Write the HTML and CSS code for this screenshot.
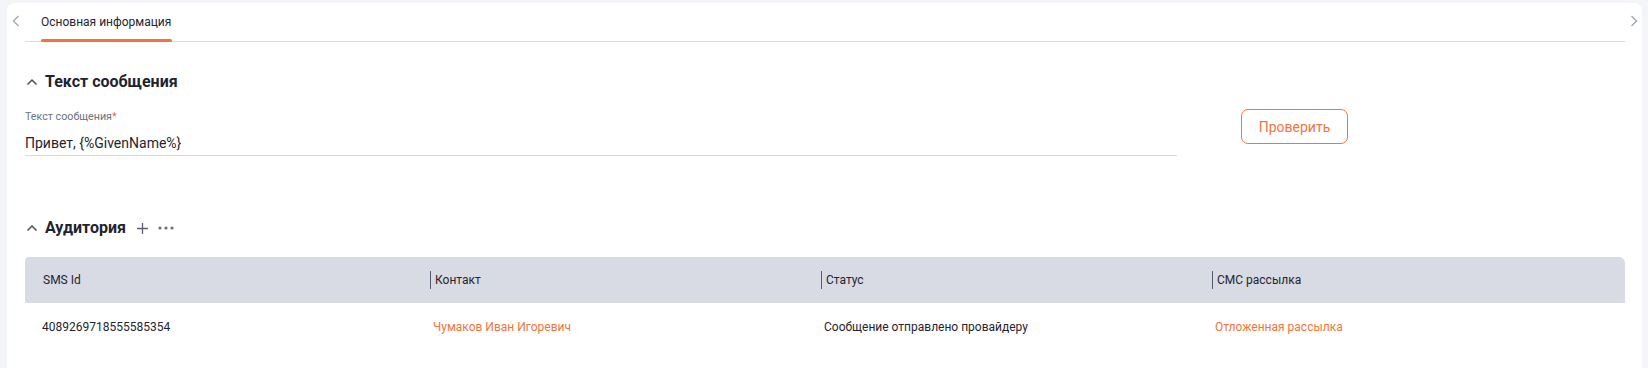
FILE: index.html
```html
<!DOCTYPE html>
<html lang="ru">
<head>
<meta charset="utf-8">
<link rel="stylesheet" href="styles.css">
</head>
<body>
<div class="card">
  <div class="tabs">
    <span class="arrow arrow-left"><svg width="8" height="12" viewBox="0 0 8 12"><path d="M6.5 1 L1.5 6 L6.5 11" fill="none" stroke="#a4a8b2" stroke-width="1.4"/></svg></span>
    <div class="tabstrip">
      <div class="tab active">Основная информация</div>
    </div>
    <span class="arrow arrow-right"><svg width="8" height="12" viewBox="0 0 8 12"><path d="M1.5 1 L6.5 6 L1.5 11" fill="none" stroke="#a4a8b2" stroke-width="1.4"/></svg></span>
  </div>
  <div class="content">
    <div class="sec-head first">
      <svg class="chev" width="12" height="8" viewBox="0 0 12 8"><path d="M1.5 6.5 L6 2 L10.5 6.5" fill="none" stroke="#4a4f5c" stroke-width="1.5"/></svg>
      <h2>Текст сообщения</h2>
    </div>
    <div class="form-row">
      <div class="field">
        <div class="label">Текст сообщения<span class="req">*</span></div>
        <div class="input">Привет, {%GivenName%}</div>
      </div>
      <button class="btn">Проверить</button>
    </div>
    <div class="sec-head second">
      <svg class="chev" width="12" height="8" viewBox="0 0 12 8"><path d="M1.5 6.5 L6 2 L10.5 6.5" fill="none" stroke="#4a4f5c" stroke-width="1.5"/></svg>
      <h2>Аудитория</h2>
      <svg class="plus" width="13" height="13" viewBox="0 0 13 13"><path d="M6.5 1 V12 M1 6.5 H12" stroke="#5b606c" stroke-width="1.3"/></svg>
      <svg class="dots" width="16" height="4" viewBox="0 0 16 4"><circle cx="2" cy="2" r="1.6" fill="#6a6f7b"/><circle cx="8" cy="2" r="1.6" fill="#6a6f7b"/><circle cx="14" cy="2" r="1.6" fill="#6a6f7b"/></svg>
    </div>
    <div class="table">
      <div class="thead">
        <div class="th">SMS Id</div>
        <div class="th div">Контакт</div>
        <div class="th div">Статус</div>
        <div class="th div">СМС рассылка</div>
      </div>
      <div class="trow">
        <div class="td">4089269718555585354</div>
        <div class="td link">Чумаков Иван Игоревич</div>
        <div class="td">Сообщение отправлено провайдеру</div>
        <div class="td link">Отложенная рассылка</div>
      </div>
    </div>
  </div>
</div>
</body>
</html>
```

FILE: styles.css
```css
html, body {
  margin: 0;
  padding: 0;
  background: #f4f5f9;
  font-family: Roboto, "Liberation Sans", sans-serif;
  color: #1f2430;
}
.card {
  margin: 3px 6px 0 7px;
  background: #fff;
  border-radius: 8px 8px 0 0;
  height: 365px;
}
.tabs {
  display: flex;
  height: 39px;
}
.arrow {
  width: 18px;
  display: flex;
  align-items: center;
  justify-content: center;
  padding-bottom: 4px;
}
.arrow-right { width: 17px; }
.tabstrip {
  flex: 1;
  display: flex;
  border-bottom: 1px solid #d9dbe2;
}
.tab {
  margin-left: 16px;
  font-size: 12px;
  line-height: 38px;
  color: #1f2430;
  position: relative;
}
.tab.active::after {
  content: "";
  position: absolute;
  left: 0;
  right: -1px;
  bottom: -1px;
  height: 3px;
  border-radius: 2px;
  background: #f4743b;
}
.content {
  padding: 0 17px 0 18px;
}
.sec-head {
  display: flex;
  align-items: center;
  height: 24px;
}
.sec-head.first { margin-top: 28px; }
.sec-head.second { margin-top: 60px; }
.chev { margin-left: 1px; margin-right: 7px; }
h2 {
  margin: 0;
  font-size: 16px;
  font-weight: 700;
  line-height: 24px;
  color: #1e2330;
}
.plus { margin-left: 10px; }
.dots { margin-left: 9px; }
.form-row {
  display: flex;
  align-items: flex-start;
  margin-top: 16px;
}
.field { width: 1152px; }
.label {
  font-size: 10.7px;
  line-height: 14px;
  color: #6b7280;
}
.req { color: #f0623c; }
.input {
  padding: 9px 0 2px;
  font-size: 14px;
  line-height: 20px;
  color: #1f2430;
  border-bottom: 1px solid #d9dbe2;
}
.btn {
  margin-left: 64px;
  margin-top: -1px;
  width: 107px;
  height: 35px;
  border: 1px solid #f4743b;
  border-radius: 7px;
  background: #fff;
  color: #f4743b;
  font-family: inherit;
  font-size: 14px;
  cursor: pointer;
}
.table { margin-top: 17px; }
.thead {
  display: flex;
  height: 46px;
  align-items: center;
  background: #d8dbe3;
  border-radius: 4px 6px 0 0;
  padding-left: 14px;
}
.trow {
  display: flex;
  height: 48px;
  align-items: center;
  padding-left: 14px;
}
.th, .td {
  width: 391px;
  font-size: 12px;
  line-height: 18px;
  padding-left: 4px;
  box-sizing: border-box;
}
.th { color: #1f2430; }
.th.div { border-left: 1px solid #555b6a; }
.td { color: #1f2430; padding-left: 3px; }
.td.link { color: #f4743b; }
```
